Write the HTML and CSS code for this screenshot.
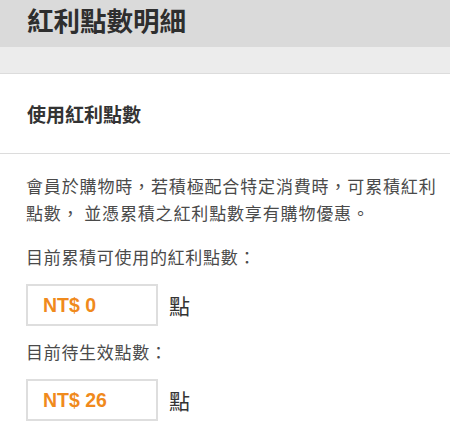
FILE: index.html
```html
<!DOCTYPE html>
<html lang="zh-Hant">
<head>
<meta charset="utf-8">
<link rel="stylesheet" href="styles.css">
</head>
<body>
<header class="topbar"><h1 class="title">紅利點數明細</h1></header>
<div class="strip"></div>
<section class="section-head"><h2 class="section-title">使用紅利點數</h2></section>
<main class="content">
  <p class="desc">會員於購物時，若積極配合特定消費時，可累積紅利點數， 並憑累積之紅利點數享有購物優惠。</p>
  <p class="label">目前累積可使用的紅利點數：</p>
  <div class="row">
    <div class="box">NT$ 0</div><span class="unit">點</span>
  </div>
  <p class="label label-2">目前待生效點數：</p>
  <div class="row">
    <div class="box">NT$ 26</div><span class="unit">點</span>
  </div>
</main>
</body>
</html>
```
FILE: styles.css
```css
* { box-sizing: border-box; }
html, body { margin: 0; padding: 0; background: #fff; }
body {
  width: 450px;
  font-family: "Noto Sans CJK TC", "Noto Sans", sans-serif;
  color: #333;
}
.topbar {
  height: 47px;
  background: #dadada;
  padding-left: 27px;
  display: flex;
  align-items: center;
}
.title {
  margin: 0;
  font-size: 26.5px;
  font-weight: 700;
  color: #2e2e2e;
  line-height: 1;
  position: relative;
  top: -3px;
}
.strip {
  height: 27px;
  background: #ececec;
  border-bottom: 1px solid #dcdcdc;
}
.section-head {
  height: 80px;
  padding-left: 27px;
  display: flex;
  align-items: center;
  border-bottom: 1px solid #dcdcdc;
}
.section-title {
  margin: 0;
  font-size: 19px;
  font-weight: 700;
  color: #333;
  line-height: 1;
}
.content {
  padding: 18px 10px 0 26px;
}
.desc {
  margin: 0;
  font-size: 17px;
  letter-spacing: 0.85px;
  line-height: 27px;
  color: #4a4a4a;
}
.label {
  margin: 17px 0 0;
  font-size: 17px;
  letter-spacing: 0.7px;
  line-height: 27px;
  color: #4a4a4a;
}
.label-2 { margin-top: 12px; }
.row {
  display: flex;
  align-items: center;
  gap: 11px;
  margin-top: 14px;
}
.box {
  width: 132px;
  height: 42px;
  border: 2px solid #dedede;
  padding-left: 15px;
  display: flex;
  align-items: center;
  font-family: "Liberation Sans", Arial, sans-serif;
  font-weight: 700;
  font-size: 19.5px;
  color: #f08a1c;
}
.unit {
  font-size: 21px;
  color: #333;
}
```
